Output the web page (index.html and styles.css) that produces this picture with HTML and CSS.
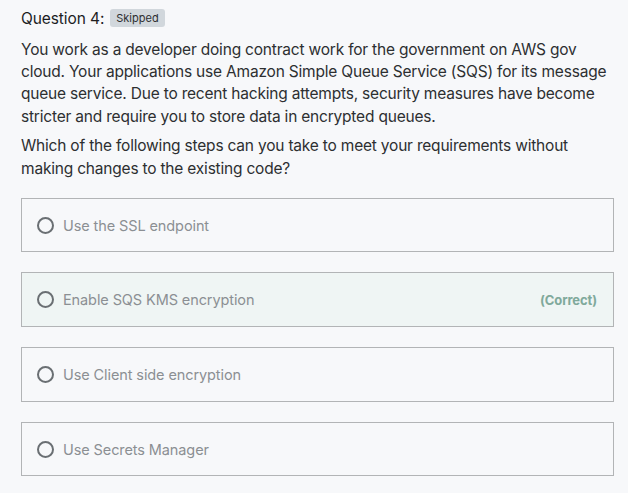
FILE: index.html
```html
<!DOCTYPE html>
<html>
<head>
<meta charset="utf-8">
<link rel="stylesheet" href="styles.css">
</head>
<body>
<div class="question">
  <div class="q-header">
    <span class="q-title">Question 4:</span>
    <span class="badge">Skipped</span>
  </div>
  <div class="q-body">
    <p>You work as a developer doing contract work for the government on AWS gov cloud. Your applications use Amazon Simple Queue Service (SQS) for its message queue service. Due to recent hacking attempts, security measures have become stricter and require you to store data in encrypted queues.</p>
    <p>Which of the following steps can you take to meet your requirements without making changes to the existing code?</p>
  </div>
  <ul class="options">
    <li class="option"><span class="radio"></span><span class="opt-text">Use the SSL endpoint</span></li>
    <li class="option correct"><span class="radio"></span><span class="opt-text">Enable SQS KMS encryption</span><span class="tag">(Correct)</span></li>
    <li class="option"><span class="radio"></span><span class="opt-text">Use Client side encryption</span></li>
    <li class="option"><span class="radio"></span><span class="opt-text">Use Secrets Manager</span></li>
  </ul>
</div>
</body>
</html>
```

FILE: styles.css
```css
html, body {
  margin: 0;
  padding: 0;
  background: #f7f8fa;
}
body {
  font-family: Inter, "Noto Sans", "Liberation Sans", sans-serif;
  color: #1c1d1f;
}
.question {
  padding: 8px 0 0 21px;
}
.q-header {
  display: flex;
  align-items: center;
  gap: 6px;
  height: 20px;
  font-size: 15.5px;
  letter-spacing: -0.1px;
}
.q-title {
  color: #1c1d1f;
}
.badge {
  background: #d1d7dc;
  color: #2d2f31;
  font-size: 11px;
  letter-spacing: 0;
  border-radius: 3px;
  padding: 2px 6px;
  line-height: 14px;
}
.q-body {
  margin-top: 11px;
  padding-right: 14px;
  font-size: 15.5px;
  line-height: 22.2px;
  letter-spacing: -0.2px;
  color: #2d2f31;
}
.q-body p {
  margin: 0 0 7.5px 0;
}
.options {
  list-style: none;
  margin: 18px 14px 0 0;
  padding: 0;
  display: flex;
  flex-direction: column;
  gap: 20px;
}
.option {
  display: flex;
  align-items: center;
  height: 52.7px;
  border: 1px solid #b2b4b6;
  padding: 0 16px 0 15px;
  font-size: 14.5px;
  letter-spacing: -0.1px;
  color: #8b8f93;
}
.option.correct {
  background: #eff5f4;
}
.radio {
  width: 13px;
  height: 13px;
  border: 2px solid #6a6f73;
  border-radius: 50%;
  margin-right: 9px;
  flex: none;
}
.opt-text {
  flex: 1;
}
.tag {
  font-size: 13px;
  font-weight: 700;
  color: #80a99b;
}
```
